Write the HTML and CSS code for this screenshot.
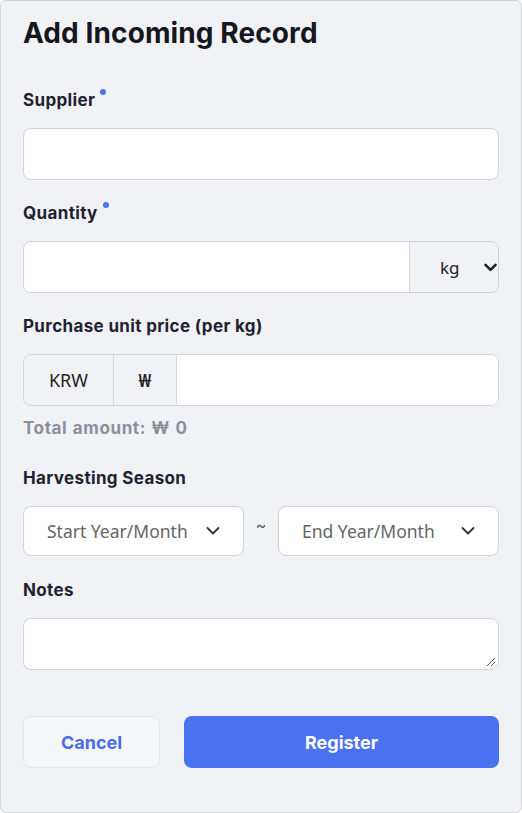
FILE: index.html
```html
<!DOCTYPE html>
<html>
<head>
<meta charset="utf-8">
<link rel="stylesheet" href="styles.css">
</head>
<body>
<div class="card">
  <h1 class="title">Add Incoming Record</h1>

  <div class="field f-supplier">
    <label class="label">Supplier<span class="req"></span></label>
    <div class="box input"></div>
  </div>

  <div class="field f-qty">
    <label class="label">Quantity<span class="req"></span></label>
    <div class="box group">
      <div class="grow"></div>
      <div class="unit">
        <span>kg</span>
        <svg class="chev-bold" width="13" height="9" viewBox="0 0 13 9"><path d="M1.5 1.8 L6.5 6.8 L11.5 1.8" fill="none" stroke="#222" stroke-width="2.6" stroke-linecap="round" stroke-linejoin="round"/></svg>
      </div>
    </div>
  </div>

  <div class="field f-price">
    <label class="label">Purchase unit price (per kg)</label>
    <div class="box group">
      <div class="seg krw">KRW</div>
      <div class="seg won">₩</div>
      <div class="grow"></div>
    </div>
    <div class="total">Total amount: ₩ 0</div>
  </div>

  <div class="field f-season">
    <label class="label">Harvesting Season</label>
    <div class="season">
      <div class="box sel"><span>Start Year/Month</span>
        <svg width="14" height="8" viewBox="0 0 14 8"><path d="M1.5 1 L7 6.5 L12.5 1" fill="none" stroke="#333" stroke-width="1.8" stroke-linecap="round" stroke-linejoin="round"/></svg>
      </div>
      <span class="tilde">~</span>
      <div class="box sel"><span>End Year/Month</span>
        <svg width="14" height="8" viewBox="0 0 14 8"><path d="M1.5 1 L7 6.5 L12.5 1" fill="none" stroke="#333" stroke-width="1.8" stroke-linecap="round" stroke-linejoin="round"/></svg>
      </div>
    </div>
  </div>

  <div class="field f-notes">
    <label class="label">Notes</label>
    <div class="box notes">
      <svg class="grip" width="12" height="12" viewBox="0 0 12 12"><path d="M11 3 L3 11 M11 7 L7 11" stroke="#555" stroke-width="1" fill="none"/></svg>
    </div>
  </div>

  <div class="actions">
    <button class="btn cancel">Cancel</button>
    <button class="btn register">Register</button>
  </div>
</div>
</body>
</html>
```
FILE: styles.css
```css
* { box-sizing: border-box; }
html, body { margin: 0; padding: 0; background: #ffffff; }
body { font-family: Inter, "Noto Sans", sans-serif; }

.card {
  width: 522px;
  height: 813px;
  background: #f1f2f6;
  border: 1px solid #d3d5da;
  border-radius: 6px;
  padding: 0 22px;
  display: flex;
  flex-direction: column;
}

.title {
  margin: 15px 0 0;
  font-size: 28px;
  line-height: 34px;
  font-weight: 700;
  color: #15171c;
  letter-spacing: 0.1px;
}

.field { display: flex; flex-direction: column; }
.f-supplier { margin-top: 40px; }
.f-qty { margin-top: 23px; }
.f-price { margin-top: 23px; }
.f-season { margin-top: 30px; }
.f-notes { margin-top: 24px; }

.label {
  font-size: 17px;
  line-height: 20px;
  font-weight: 700;
  color: #1f2230;
  letter-spacing: 0.35px;
  position: relative;
  align-self: flex-start;
}
.req {
  position: absolute;
  right: -11px;
  top: -1px;
  width: 6px;
  height: 6px;
  border-radius: 50%;
  background: #4a72f0;
}

.box {
  margin-top: 18px;
  height: 52px;
  background: #ffffff;
  border: 1px solid #cfd2d8;
  border-radius: 8px;
}

.group { display: flex; overflow: hidden; }
.grow { flex: 1; background: #fff; }
.unit {
  width: 89px;
  background: #f1f2f6;
  border-left: 1px solid #d6d8dd;
  display: flex;
  align-items: center;
  padding-left: 30px;
  gap: 24px;
  font-family: "Noto Sans", sans-serif;
  font-size: 17px;
  color: #222;
}
.seg {
  background: #f1f2f6;
  border-right: 1px solid #d6d8dd;
  display: flex;
  align-items: center;
  justify-content: center;
  font-family: "Noto Sans", sans-serif;
  font-size: 18px;
  color: #222;
}
.krw { width: 90px; }
.won { width: 63px; font-weight: 600; }

.total {
  margin-top: 12px;
  font-size: 17px;
  line-height: 20px;
  font-weight: 700;
  color: #8a909c;
  letter-spacing: 0.6px;
  word-spacing: 1px;
}

.season { display: flex; align-items: center; }
.sel {
  flex: 1;
  height: 50px;
  margin-top: 18px;
  display: flex;
  align-items: center;
  justify-content: space-between;
  padding: 0 23px 0 23px;
  font-family: "Noto Sans", sans-serif;
  font-size: 17.5px;
  color: #666;
}
.tilde {
  width: 34px;
  text-align: center;
  font-size: 16px;
  color: #555;
  margin-top: 6px;
}

.notes {
  height: 52px;
  margin-top: 18px;
  position: relative;
}
.grip { position: absolute; right: 2px; bottom: 2px; }

.actions {
  margin-top: 46px;
  display: flex;
  gap: 24px;
}
.btn {
  height: 52px;
  border-radius: 8px;
  font-family: Inter, sans-serif;
  font-size: 18px;
  font-weight: 700;
  letter-spacing: 0;
}
.cancel {
  width: 137px;
  background: #f5f6fa;
  border: 1px solid #e3e5ea;
  color: #4a6ee0;
}
.register {
  flex: 1;
  background: #4a72f0;
  border: none;
  color: #fff;
}
```
